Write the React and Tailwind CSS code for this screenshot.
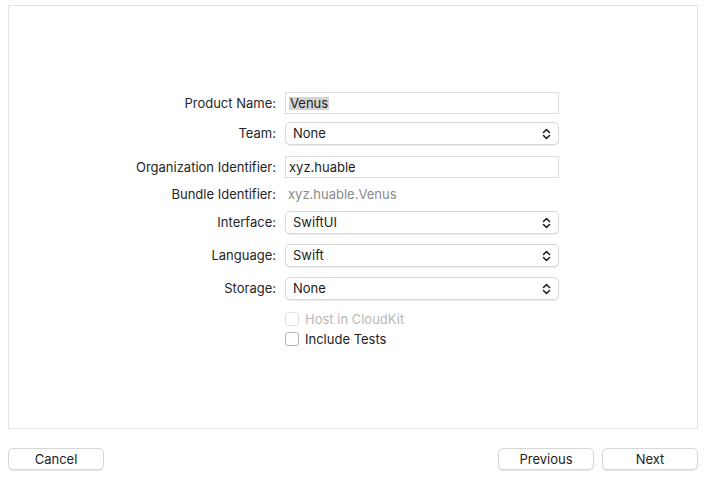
import { useState } from "react";

function Chevrons() {
  return (
    <svg width="9" height="12" viewBox="0 0 9 12" fill="none" stroke="#222" strokeWidth="1.6" strokeLinecap="round" strokeLinejoin="round">
      <path d="M1.5 4.5 L4.5 1.5 L7.5 4.5" />
      <path d="M1.5 7.5 L4.5 10.5 L7.5 7.5" />
    </svg>
  );
}

function Row({ label, children, className = "" }) {
  return (
    <div className={`flex items-center ${className}`}>
      <div className="w-[276px] pr-[9px] text-right text-[#262626]">{label}</div>
      <div className="w-[274px]">{children}</div>
    </div>
  );
}

function TextField({ children }) {
  return (
    <div className="h-[22px] border border-[#dcdcdc] bg-white px-[3px] flex items-center text-[#1d1d1d]">
      {children}
    </div>
  );
}

function Popup({ value }) {
  return (
    <div className="h-[23px] rounded-[5px] border border-[#d8d8d8] bg-white shadow-[0_1px_1px_rgba(0,0,0,0.08)] flex items-center justify-between pl-[7px] pr-[7px] text-[#1d1d1d]">
      <span>{value}</span>
      <Chevrons />
    </div>
  );
}

function Checkbox({ label, disabled }) {
  return (
    <div className="flex items-center gap-[6px]">
      <div className={`w-[14px] h-[14px] rounded-[3px] border bg-white ${disabled ? "border-[#e2e2e2]" : "border-[#b5b5b5]"}`} />
      <span className={disabled ? "text-[#b8b8b8]" : "text-[#1d1d1d]"}>{label}</span>
    </div>
  );
}

function MacButton({ children, className = "" }) {
  return (
    <button className={`h-[22px] rounded-[5px] border border-[#d6d6d6] bg-white shadow-[0_1px_1px_rgba(0,0,0,0.1)] text-[#1d1d1d] ${className}`}>
      {children}
    </button>
  );
}

export default function App() {
  const [tests] = useState(false);

  return (
    <div className="w-[704px] h-[481px] bg-white text-[13px] leading-none font-['Inter','Liberation_Sans',sans-serif] flex flex-col">
      {/* Main panel */}
      <div className="ml-[8px] mr-[6px] mt-[5px] h-[424px] border border-[#e3e3e3] bg-white pt-[86px]">
        <Row label="Product Name:">
          <TextField>
            <span className="bg-[#d4d4d4] px-[1px]">Venus</span>
          </TextField>
        </Row>
        <Row label="Team:" className="mt-[8px]">
          <Popup value="None" />
        </Row>
        <Row label="Organization Identifier:" className="mt-[11px]">
          <TextField>xyz.huable</TextField>
        </Row>
        <Row label="Bundle Identifier:" className="mt-[5px] h-[22px]">
          <span className="pl-[3px] text-[#8a8a8a]">xyz.huable.Venus</span>
        </Row>
        <Row label="Interface:" className="mt-[6px]">
          <Popup value="SwiftUI" />
        </Row>
        <Row label="Language:" className="mt-[10px]">
          <Popup value="Swift" />
        </Row>
        <Row label="Storage:" className="mt-[10px]">
          <Popup value="None" />
        </Row>
        <Row label="" className="mt-[12px]">
          <Checkbox label="Host in CloudKit" disabled />
        </Row>
        <Row label="" className="mt-[6px]">
          <Checkbox label="Include Tests" disabled={tests} />
        </Row>
      </div>

      {/* Footer buttons */}
      <div className="ml-[8px] mr-[6px] mt-[19px] flex items-center">
        <MacButton className="w-[96px]">Cancel</MacButton>
        <div className="flex-1" />
        <MacButton className="w-[96px]">Previous</MacButton>
        <MacButton className="w-[96px] ml-[8px]">Next</MacButton>
      </div>
    </div>
  );
}
